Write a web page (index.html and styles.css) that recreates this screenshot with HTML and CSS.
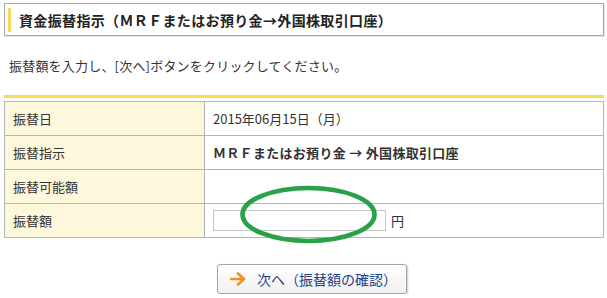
FILE: index.html
```html
<!DOCTYPE html>
<html lang="ja">
<head>
    <meta charset="UTF-8">
    <title>資金振替指示</title>
    <link rel="stylesheet" href="styles.css">
</head>
<body>
    <div class="page">
        <div class="title-box">
            <span class="title-bar"></span>
            <h1 class="title">資金振替指示（ＭＲＦまたはお預り金→外国株取引口座）</h1>
        </div>

        <p class="lead">振替額を入力し、[次へ]ボタンをクリックしてください。</p>

        <div class="table-top"></div>
        <table class="form-table">
            <tr>
                <th>振替日</th>
                <td>2015年06月15日（月）</td>
            </tr>
            <tr>
                <th>振替指示</th>
                <td class="strong">ＭＲＦまたはお預り金 → 外国株取引口座</td>
            </tr>
            <tr>
                <th>振替可能額</th>
                <td></td>
            </tr>
            <tr>
                <th>振替額</th>
                <td><input type="text" class="amount"><span class="yen">円</span></td>
            </tr>
        </table>

        <div class="actions">
            <button class="next-btn" type="button">
                <svg class="arrow" width="16" height="14" viewBox="0 0 16 14">
                    <path d="M1 7 H14 M8 1.5 L14 7 L8 12.5" fill="none" stroke="#f0901e" stroke-width="2.6" stroke-linecap="round" stroke-linejoin="round"/>
                </svg>
                <span>次へ（振替額の確認）</span>
            </button>
        </div>

        <!-- 注釈の丸 -->
        <svg class="mark" width="142" height="62" viewBox="0 0 142 62">
            <ellipse cx="70.5" cy="30.5" rx="66" ry="26.5" fill="none" stroke="#29a147" stroke-width="4.6"/>
        </svg>
    </div>
</body>
</html>
```

FILE: styles.css
```css
*{
    margin : 0;
    padding : 0;
    box-sizing : border-box;
}
body{
    background-color : #fff;
    font-family : "Noto Sans CJK JP", "Liberation Sans", sans-serif;
    font-size : 13px;
    color : #333;
}
.page{
    position : relative;
    width : 607px;
    padding : 3px 3px 0 4px;
}
.title-box{
    display : flex;
    align-items : center;
    height : 33px;
    border : 1px solid #a8a8a8;
    box-shadow : 1px 1px 0 #e2e2e2;
    padding-left : 3px;
}
.title-bar{
    width : 3px;
    height : 24px;
    background-color : #f5da55;
    margin-right : 8px;
}
.title{
    font-size : 14px;
    font-weight : bold;
    color : #222;
    letter-spacing : 0.35px;
}
.lead{
    margin-top : 20px;
    padding-left : 5px;
    line-height : 20px;
    letter-spacing : 0.2px;
}
.table-top{
    margin-top : 19px;
    height : 3px;
    background-color : #f7dc52;
}
.form-table{
    margin-top : 3px;
    width : 600px;
    border-collapse : collapse;
}
.form-table th,
.form-table td{
    height : 34px;
    border : 1px solid #b4b4b4;
    text-align : left;
    font-weight : normal;
    padding : 0 8px;
    vertical-align : middle;
}
.form-table th{
    width : 200px;
    background-color : #fdf7dc;
}
.form-table td.strong{
    font-weight : bold;
    letter-spacing : 0.3px;
}
.amount{
    width : 173px;
    height : 21px;
    border : 1px solid #c4c4c4;
    vertical-align : middle;
}
.yen{
    margin-left : 5px;
    vertical-align : middle;
}
.actions{
    display : flex;
    justify-content : center;
    padding-left : 16px;
    margin-top : 26px;
}
.next-btn{
    display : flex;
    align-items : center;
    width : 190px;
    height : 30px;
    padding-left : 12px;
    border : 1px solid #a5a5a5;
    border-radius : 3px;
    background : linear-gradient(#ffffff, #f0f0f0);
    box-shadow : 1px 1px 2px #c8c8c8;
    font-family : inherit;
    font-size : 14px;
    color : #1f3f86;
}
.next-btn .arrow{
    margin-right : 11px;
}
.mark{
    position : absolute;
    left : 238px;
    top : 184px;
}
```
